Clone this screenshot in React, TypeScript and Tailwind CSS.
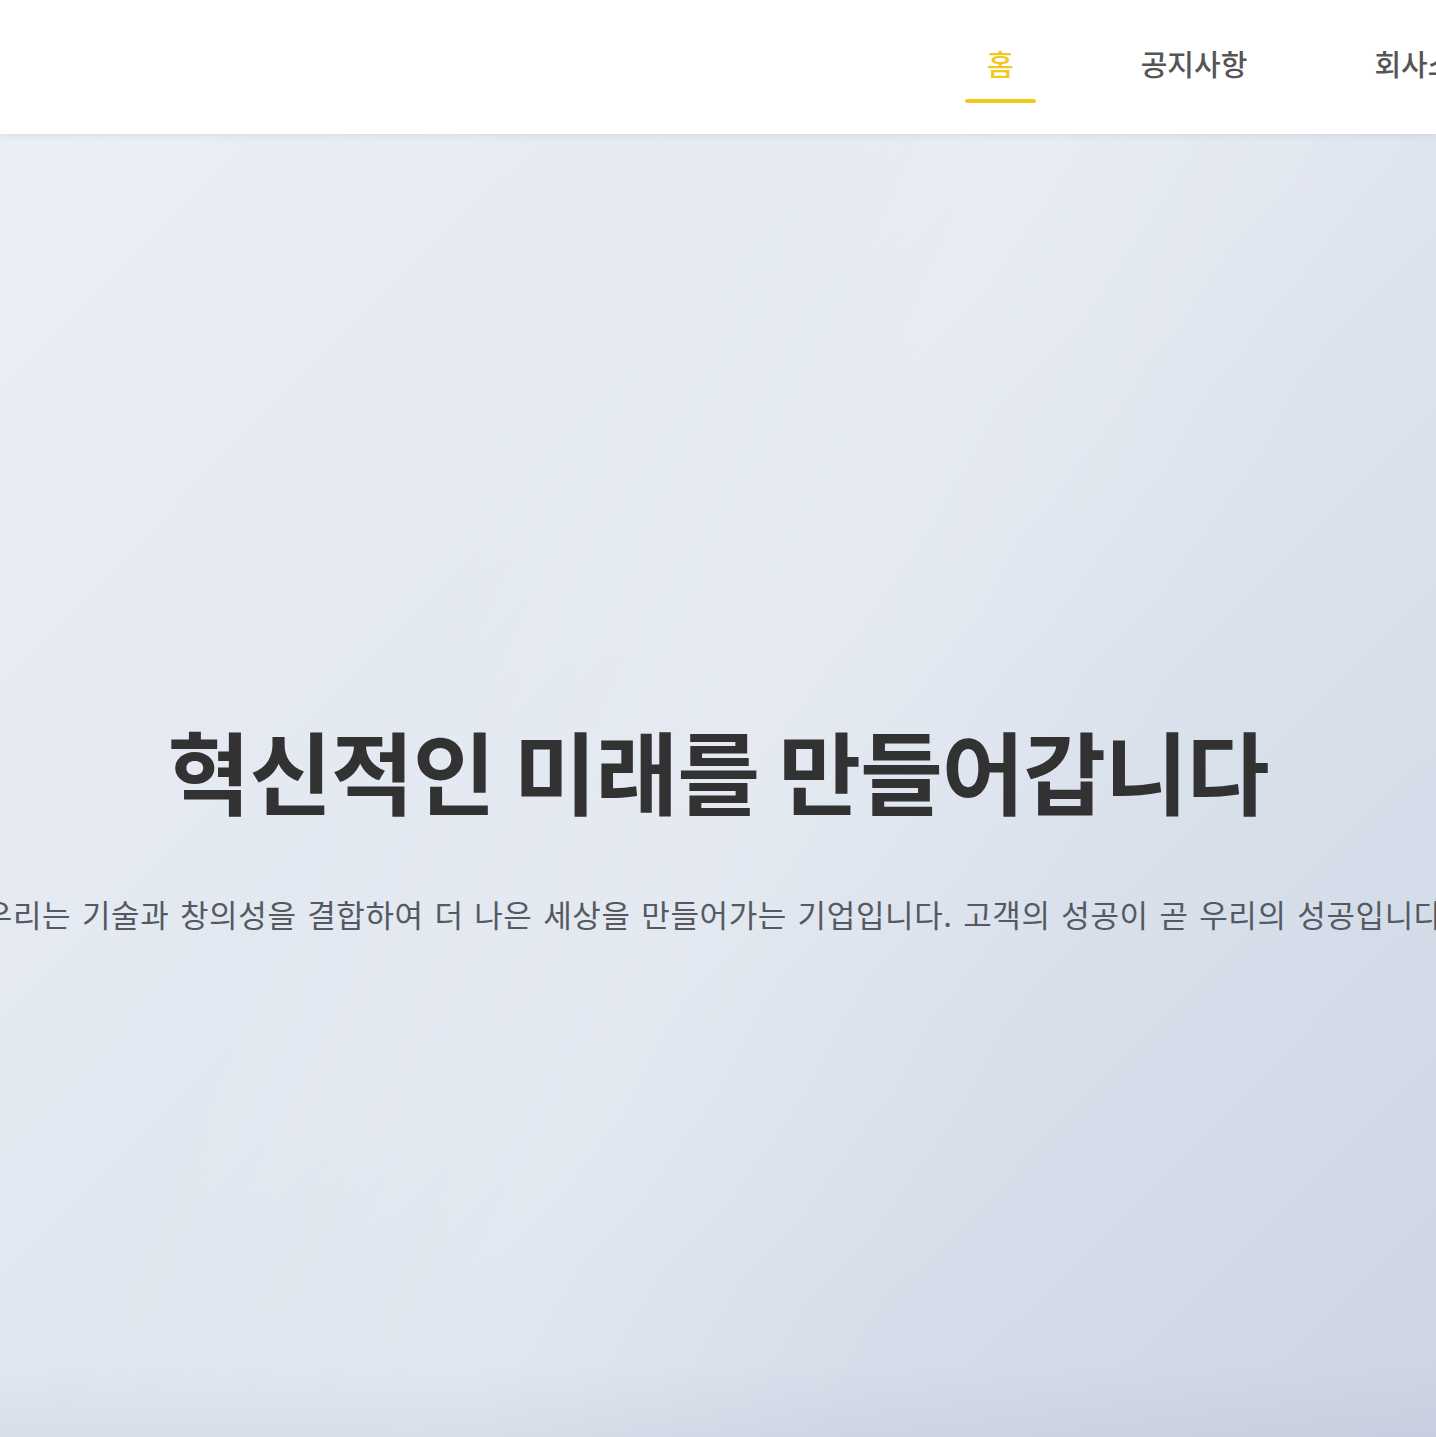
import React from "react";

const FONT = "font-['Noto_Sans_CJK_KR','Noto_Sans',sans-serif]";

function NavItem({ label, active }: { label: string; active?: boolean }) {
  return (
    <div className="flex flex-col items-stretch">
      <span
        className={`px-[22px] text-[29px] leading-[1.5] font-medium ${
          active ? "text-[#f3c81c]" : "text-[#555555]"
        }`}
      >
        {label}
      </span>
      <span
        className={`mt-[13px] h-[4px] rounded-full ${
          active ? "bg-[#f3c81c]" : "bg-transparent"
        }`}
      />
    </div>
  );
}

export default function App() {
  return (
    <div className={`${FONT} h-[1437px] w-full overflow-hidden bg-[#dfe5ee]`}>
      <header className="relative z-10 h-[134px] bg-white shadow-[0_2px_6px_rgba(0,0,0,0.07)]">
        <nav className="flex items-start gap-[83px] whitespace-nowrap pl-[965px] pt-[42px]">
          <NavItem label="홈" active />
          <NavItem label="공지사항" />
          <NavItem label="회사소개" />
          <NavItem label="문의하기" />
        </nav>
      </header>
      <section className="relative flex h-[1380px] flex-col items-center bg-[linear-gradient(135deg,#ebeff7_0%,#e1e7f0_45%,#d7dfeb_70%,#ccd4e4_100%)] pt-[581px]">
        <div className="pointer-events-none absolute inset-0 bg-[linear-gradient(115deg,transparent_30%,rgba(255,255,255,0.18)_50%,transparent_70%)]" />
        <div className="pointer-events-none absolute inset-x-0 top-[1230px] h-[150px] bg-[linear-gradient(180deg,transparent,rgba(140,150,178,0.2))]" />
        <h1 className="relative whitespace-nowrap text-[90px] leading-[1.2] font-bold tracking-[-0.012em] text-[#323232]">
          혁신적인 미래를 만들어갑니다
        </h1>
        <p className="relative mt-[68px] whitespace-nowrap text-[31px] leading-[1.5] tracking-[0.02em] [word-spacing:0.1em] text-[#555a62]">
          우리는 기술과 창의성을 결합하여 더 나은 세상을 만들어가는 기업입니다. 고객의 성공이 곧 우리의 성공입니다.
        </p>
      </section>
    </div>
  );
}
